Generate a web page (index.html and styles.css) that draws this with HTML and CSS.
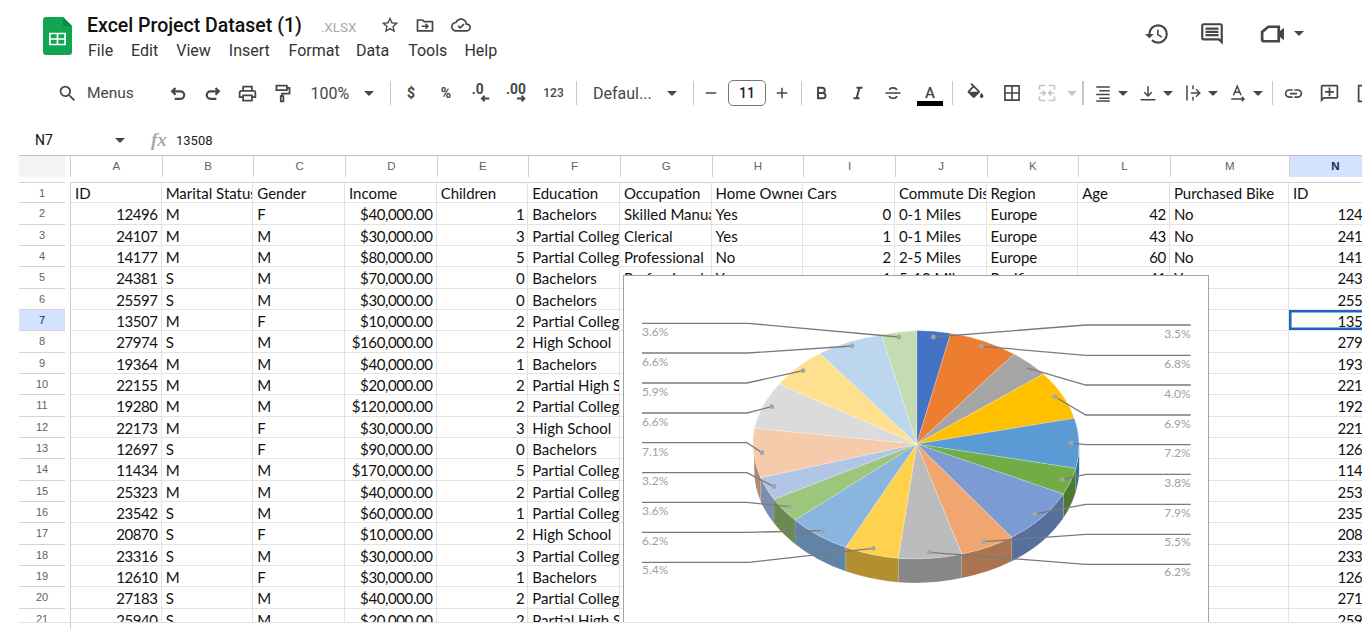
FILE: index.html
```html
<!DOCTYPE html>
<html lang="en">
<head>
<meta charset="utf-8">
<title>Excel Project Dataset (1)</title>
<link rel="stylesheet" href="styles.css">
</head>
<body>
<header class="topbar">
  <svg class="logo" viewBox="0 0 29 38"><path fill="#12a550" d="M3 0h17l9 9v26a3 3 0 0 1-3 3H3a3 3 0 0 1-3-3V3a3 3 0 0 1 3-3z"/><path fill="#0b8a41" d="M20 0l9 9h-9z"/><path fill="none" stroke="#fff" stroke-width="1.7" d="M6.900 16.500h15.200v11H6.900zM6.900 22h15.200M14.500 16.500v11"/></svg>
  <div class="docinfo">
    <div class="titlerow">
      <span class="doctitle">Excel Project Dataset (1)</span>
      <span class="ext">.XLSX</span>
      <svg class="ti star" viewBox="0 0 24 24"><path d="M22 9.240l-7.190-.62L12 2 9.190 8.630 2 9.240l5.460 4.730L5.820 21 12 17.270 18.180 21l-1.630-7.030L22 9.240zM12 15.400l-3.760 2.270 1-4.280-3.320-2.880 4.380-.38L12 6.100l1.710 4.040 4.380.38-3.320 2.880 1 4.280L12 15.400z"/></svg>
      <svg class="ti folder" viewBox="0 0 24 24"><path class="st" d="M3 6h6l2 2h10v11H3z"/><path class="st" d="M8 13.500h7M12.500 10.500l3 3-3 3"/></svg>
      <svg class="ti cloud" viewBox="0 0 24 24"><path d="M19.350 10.040C18.670 6.590 15.640 4 12 4 9.110 4 6.600 5.640 5.350 8.040 2.340 8.360 0 10.910 0 14c0 3.310 2.690 6 6 6h13c2.760 0 5-2.240 5-5 0-2.640-2.050-4.780-4.650-4.960zM19 18H6c-2.210 0-4-1.790-4-4s1.790-4 4-4h.71C7.370 7.690 9.480 6 12 6c3.040 0 5.500 2.460 5.500 5.500v.5H19c1.660 0 3 1.340 3 3s-1.340 3-3 3z"/><path class="st" d="M8.500 13l2.500 2.500 4.500-4.500"/></svg>
    </div>
    <nav class="menubar">
      <span>File</span><span>Edit</span><span>View</span><span>Insert</span><span>Format</span><span>Data</span><span>Tools</span><span>Help</span>
    </nav>
  </div>
  <div class="topright">
    <svg class="bigicon" viewBox="0 0 24 24"><path d="M13 3a9 9 0 0 0-9 9H1l3.890 3.890.07.14L9 12H6c0-3.870 3.130-7 7-7s7 3.130 7 7-3.130 7-7 7c-1.930 0-3.680-.79-4.940-2.060l-1.420 1.420A8.954 8.954 0 0 0 13 21a9 9 0 0 0 0-18zm-1 5v5l4.280 2.540.72-1.210-3.500-2.080V8H12z"/></svg>
    <svg class="bigicon" viewBox="0 0 24 24"><path d="M20 2H4c-1.100 0-2 .9-2 2v12c0 1.100.9 2 2 2h14l4 4V4c0-1.100-.9-2-2-2zm0 15.170L18.830 16H4V4h16v13.170zM6 12h12v2H6zm0-3h12v2H6zm0-3h12v2H6z"/></svg>
    <svg class="bigicon meet" viewBox="0 0 26 24"><path class="st thick" d="M9 5h10v14H5a2 2 0 0 1-2-2V10z"/><path d="M19 10l5-4v12l-5-4z"/></svg>
    <span class="caret"></span>
  </div>
</header>

<div class="toolbar">
  <span class="tool w35"><svg class="ic big" viewBox="0 0 24 24"><path d="M15.500 14h-.79l-.28-.27A6.471 6.471 0 0 0 16 9.500 6.500 6.500 0 1 0 9.500 16c1.610 0 3.090-.59 4.230-1.570l.27.28v.79l5 4.990L20.490 19l-4.990-5zm-6 0C7.010 14 5 11.990 5 9.500S7.010 5 9.500 5 14 7.010 14 9.500 11.990 14 9.500 14z"/></svg></span>
  <span class="menus">Menus</span>
  <span class="tool w35"><svg class="ic mid" viewBox="0 0 24 24"><path class="st thick" d="M9 6L5 10l4 4M5 10h10a4.500 4.500 0 0 1 0 9H8"/></svg></span>
  <span class="tool w35"><svg class="ic mid" viewBox="0 0 24 24"><path class="st thick" d="M15 6l4 4-4 4M19 10H9a4.500 4.500 0 0 0 0 9h7"/></svg></span>
  <span class="tool w35"><svg class="ic big" viewBox="0 0 24 24"><path d="M19 8h-1V3H6v5H5c-1.660 0-3 1.340-3 3v6h4v4h12v-4h4v-6c0-1.660-1.340-3-3-3zM8 5h8v3H8V5zm8 12v2H8v-4h8v2zm2-2v-2H6v2H4v-4c0-.55.45-1 1-1h14c.55 0 1 .45 1 1v4h-2z"/></svg></span>
  <span class="tool w35"><svg class="ic big" viewBox="0 0 24 24"><path class="st" d="M5 3h12v5H5zM17 5.500h3V12h-8.500v3M10 15h3v6h-3z"/></svg></span>
  <span class="zoomval">100%</span>
  <span class="tool w29"><span class="caret"></span></span>
  <span class="sep s390"></span>
  <span class="tool w35 sym">$</span>
  <span class="tool w35 sym">%</span>
  <span class="tool w35"><svg class="ic dech" viewBox="0 0 24 24"><text class="dec" x="2" y="13">.0</text><path class="st" d="M21 18h-8M16 15l-3 3 3 3"/></svg></span>
  <span class="tool w36"><svg class="ic dech" viewBox="0 0 24 24"><text class="dec" x="0" y="13">.00</text><path class="st" d="M12 18h8M17 15l3 3-3 3"/></svg></span>
  <span class="tool w38 num123">123</span>
  <span class="sep s576"></span>
  <span class="fontname">Defaul...</span>
  <span class="tool w34"><span class="caret"></span></span>
  <span class="sep s693"></span>
  <span class="tool w34"><svg class="ic" viewBox="0 0 24 24"><path class="st" d="M5 12h14"/></svg></span>
  <span class="sizebox">11</span>
  <span class="tool w32"><svg class="ic" viewBox="0 0 24 24"><path class="st" d="M5 12h14M12 5v14"/></svg></span>
  <span class="sep s801"></span>
  <span class="tool w38"><svg class="ic" viewBox="0 0 24 24"><path class="st thick" d="M8 5h5.500a3.400 3.400 0 0 1 0 7H8zM8 12h6.500a3.500 3.500 0 0 1 0 7H8z"/></svg></span>
  <span class="tool w35"><svg class="ic" viewBox="0 0 24 24"><path class="st thick" d="M10 5h8M6 19h8M14 5l-4 14"/></svg></span>
  <span class="tool w35"><svg class="ic mid" viewBox="0 0 24 24"><path class="st" d="M3 12h18M16.500 8.500C16 5.500 8 4.500 8 8.500M7.500 15.500c.5 3.500 9 4 9 0"/></svg></span>
  <span class="tool w40 textcolor"><span class="letter">A</span><span class="colorbar"></span></span>
  <span class="sep s952"></span>
  <span class="tool w44"><svg class="ic big" viewBox="0 0 24 24"><path d="M16.560 8.940L7.620 0 6.210 1.410l2.380 2.380-5.150 5.150c-.59.59-.59 1.540 0 2.120l5.500 5.500c.29.29.68.44 1.060.44s.77-.15 1.060-.44l5.500-5.500c.59-.58.59-1.530 0-2.120zM5.210 10L10 5.210 14.790 10H5.210zM19 11.500s-2 2.170-2 3.500c0 1.100.9 2 2 2s2-.9 2-2c0-1.330-2-3.500-2-3.500z"/></svg></span>
  <span class="tool w30"><svg class="ic mid" viewBox="0 0 24 24"><path class="st" d="M3.500 3.500h17v17h-17zM12 3.500v17M3.500 12h17"/></svg></span>
  <span class="tool w40"><svg class="ic off mid" viewBox="0 0 24 24"><path class="st" d="M3 3h7M14 3h7M3 21h7M14 21h7M3 3v5M21 3v5M3 16v5M21 16v5M3 12h6M7 9l3 3-3 3M21 12h-6M17 9l-3 3 3 3"/></svg></span>
  <span class="tool w10"><span class="caret off"></span></span>
  <span class="sep s1083"></span>
  <span class="drop first"><span class="tool w30"><svg class="ic" viewBox="0 0 24 24"><path class="st" d="M3 4h18M7 9h14M3 14h18M7 19h14M3 22.500h18"/></svg></span><span class="tool w10"><span class="caret"></span></span></span>
  <span class="drop"><span class="tool w30"><svg class="ic" viewBox="0 0 24 24"><path class="st" d="M12 3v13M7 11l5 5 5-5M2 21h20"/></svg></span><span class="tool w10"><span class="caret"></span></span></span>
  <span class="drop"><span class="tool w30"><svg class="ic" viewBox="0 0 24 24"><path class="st" d="M4 2v20M21 12H9M16 7l5 5-5 5M12 2v5M12 17v5"/></svg></span><span class="tool w10"><span class="caret"></span></span></span>
  <span class="drop"><span class="tool w30"><svg class="ic" viewBox="0 0 24 24"><path class="st" d="M6 15L11 3l5 12M7.700 11h6.600M3 20h17M17 17l3 3-3 3"/></svg></span><span class="tool w10"><span class="caret"></span></span></span>
  <span class="sep s1272"></span>
  <span class="tool w41"><svg class="ic big" viewBox="0 0 24 24"><path d="M3.900 12c0-1.710 1.390-3.100 3.100-3.100h4V7H7c-2.760 0-5 2.240-5 5s2.240 5 5 5h4v-1.900H7c-1.710 0-3.100-1.390-3.100-3.100zM8 13h8v-2H8v2zm9-6h-4v1.900h4c1.710 0 3.100 1.390 3.100 3.100s-1.390 3.100-3.100 3.100h-4V17h4c2.760 0 5-2.240 5-5s-2.240-5-5-5z"/></svg></span>
  <span class="tool w30"><svg class="ic big" viewBox="0 0 24 24"><path d="M20 2H4c-1.100 0-2 .9-2 2v18l4-4h14c1.100 0 2-.9 2-2V4c0-1.100-.9-2-2-2zm0 14H5.170L4 17.170V4h16v12zM11 5h2v4h4v2h-4v4h-2v-4H7V9h4z"/></svg></span>
  <span class="tool w30 last"><svg class="ic big" viewBox="0 0 24 24"><path class="st" d="M3 3h18v18H3zM8 17v-6M12 17V7M16 17v-3"/></svg></span>
</div>

<div class="formulabar">
  <span class="cellname">N7</span>
  <span class="caret"></span>
  <span class="fx">fx</span>
  <span class="formula">13508</span>
</div>

<main class="sheet">
  <div class="colheads">
    <span class="corner"></span><span class="gutter"></span>
    <span class="ch">A</span><span class="ch">B</span><span class="ch">C</span><span class="ch">D</span><span class="ch">E</span><span class="ch">F</span><span class="ch">G</span><span class="ch">H</span><span class="ch">I</span><span class="ch">J</span><span class="ch">K</span><span class="ch">L</span><span class="ch wide">M</span><span class="ch sel">N</span>
  </div>
  <div class="rows">
    <div class="r first"><span class="h">1</span><span class="gutter"></span><span class="c">ID</span><span class="c">Marital Status</span><span class="c">Gender</span><span class="c">Income</span><span class="c">Children</span><span class="c">Education</span><span class="c">Occupation</span><span class="c">Home Owner</span><span class="c">Cars</span><span class="c">Commute Distance</span><span class="c">Region</span><span class="c">Age</span><span class="c wide">Purchased Bike</span><span class="c">ID</span></div>
    <div class="r"><span class="h">2</span><span class="gutter"></span><span class="c n">12496</span><span class="c">M</span><span class="c">F</span><span class="c n">$40,000.00</span><span class="c n">1</span><span class="c">Bachelors</span><span class="c">Skilled Manual</span><span class="c">Yes</span><span class="c n">0</span><span class="c">0-1 Miles</span><span class="c">Europe</span><span class="c n">42</span><span class="c wide">No</span><span class="c n">12496</span></div>
    <div class="r"><span class="h">3</span><span class="gutter"></span><span class="c n">24107</span><span class="c">M</span><span class="c">M</span><span class="c n">$30,000.00</span><span class="c n">3</span><span class="c">Partial College</span><span class="c">Clerical</span><span class="c">Yes</span><span class="c n">1</span><span class="c">0-1 Miles</span><span class="c">Europe</span><span class="c n">43</span><span class="c wide">No</span><span class="c n">24107</span></div>
    <div class="r"><span class="h">4</span><span class="gutter"></span><span class="c n">14177</span><span class="c">M</span><span class="c">M</span><span class="c n">$80,000.00</span><span class="c n">5</span><span class="c">Partial College</span><span class="c">Professional</span><span class="c">No</span><span class="c n">2</span><span class="c">2-5 Miles</span><span class="c">Europe</span><span class="c n">60</span><span class="c wide">No</span><span class="c n">14177</span></div>
    <div class="r"><span class="h">5</span><span class="gutter"></span><span class="c n">24381</span><span class="c">S</span><span class="c">M</span><span class="c n">$70,000.00</span><span class="c n">0</span><span class="c">Bachelors</span><span class="c">Professional</span><span class="c">Yes</span><span class="c n">1</span><span class="c">5-10 Miles</span><span class="c">Pacific</span><span class="c n">41</span><span class="c wide">Yes</span><span class="c n">24381</span></div>
    <div class="r"><span class="h">6</span><span class="gutter"></span><span class="c n">25597</span><span class="c">S</span><span class="c">M</span><span class="c n">$30,000.00</span><span class="c n">0</span><span class="c">Bachelors</span><span class="c"></span><span class="c"></span><span class="c"></span><span class="c"></span><span class="c"></span><span class="c"></span><span class="c wide"></span><span class="c n">25597</span></div>
    <div class="r"><span class="h hsel">7</span><span class="gutter"></span><span class="c n">13507</span><span class="c">M</span><span class="c">F</span><span class="c n">$10,000.00</span><span class="c n">2</span><span class="c">Partial College</span><span class="c"></span><span class="c"></span><span class="c"></span><span class="c"></span><span class="c"></span><span class="c"></span><span class="c wide"></span><span class="c n active">13508</span></div>
    <div class="r"><span class="h">8</span><span class="gutter"></span><span class="c n">27974</span><span class="c">S</span><span class="c">M</span><span class="c n">$160,000.00</span><span class="c n">2</span><span class="c">High School</span><span class="c"></span><span class="c"></span><span class="c"></span><span class="c"></span><span class="c"></span><span class="c"></span><span class="c wide"></span><span class="c n">27974</span></div>
    <div class="r"><span class="h">9</span><span class="gutter"></span><span class="c n">19364</span><span class="c">M</span><span class="c">M</span><span class="c n">$40,000.00</span><span class="c n">1</span><span class="c">Bachelors</span><span class="c"></span><span class="c"></span><span class="c"></span><span class="c"></span><span class="c"></span><span class="c"></span><span class="c wide"></span><span class="c n">19364</span></div>
    <div class="r"><span class="h">10</span><span class="gutter"></span><span class="c n">22155</span><span class="c">M</span><span class="c">M</span><span class="c n">$20,000.00</span><span class="c n">2</span><span class="c">Partial High School</span><span class="c"></span><span class="c"></span><span class="c"></span><span class="c"></span><span class="c"></span><span class="c"></span><span class="c wide"></span><span class="c n">22155</span></div>
    <div class="r"><span class="h">11</span><span class="gutter"></span><span class="c n">19280</span><span class="c">M</span><span class="c">M</span><span class="c n">$120,000.00</span><span class="c n">2</span><span class="c">Partial College</span><span class="c"></span><span class="c"></span><span class="c"></span><span class="c"></span><span class="c"></span><span class="c"></span><span class="c wide"></span><span class="c n">19280</span></div>
    <div class="r"><span class="h">12</span><span class="gutter"></span><span class="c n">22173</span><span class="c">M</span><span class="c">F</span><span class="c n">$30,000.00</span><span class="c n">3</span><span class="c">High School</span><span class="c"></span><span class="c"></span><span class="c"></span><span class="c"></span><span class="c"></span><span class="c"></span><span class="c wide"></span><span class="c n">22173</span></div>
    <div class="r"><span class="h">13</span><span class="gutter"></span><span class="c n">12697</span><span class="c">S</span><span class="c">F</span><span class="c n">$90,000.00</span><span class="c n">0</span><span class="c">Bachelors</span><span class="c"></span><span class="c"></span><span class="c"></span><span class="c"></span><span class="c"></span><span class="c"></span><span class="c wide"></span><span class="c n">12697</span></div>
    <div class="r"><span class="h">14</span><span class="gutter"></span><span class="c n">11434</span><span class="c">M</span><span class="c">M</span><span class="c n">$170,000.00</span><span class="c n">5</span><span class="c">Partial College</span><span class="c"></span><span class="c"></span><span class="c"></span><span class="c"></span><span class="c"></span><span class="c"></span><span class="c wide"></span><span class="c n">11434</span></div>
    <div class="r"><span class="h">15</span><span class="gutter"></span><span class="c n">25323</span><span class="c">M</span><span class="c">M</span><span class="c n">$40,000.00</span><span class="c n">2</span><span class="c">Partial College</span><span class="c"></span><span class="c"></span><span class="c"></span><span class="c"></span><span class="c"></span><span class="c"></span><span class="c wide"></span><span class="c n">25323</span></div>
    <div class="r"><span class="h">16</span><span class="gutter"></span><span class="c n">23542</span><span class="c">S</span><span class="c">M</span><span class="c n">$60,000.00</span><span class="c n">1</span><span class="c">Partial College</span><span class="c"></span><span class="c"></span><span class="c"></span><span class="c"></span><span class="c"></span><span class="c"></span><span class="c wide"></span><span class="c n">23542</span></div>
    <div class="r"><span class="h">17</span><span class="gutter"></span><span class="c n">20870</span><span class="c">S</span><span class="c">F</span><span class="c n">$10,000.00</span><span class="c n">2</span><span class="c">High School</span><span class="c"></span><span class="c"></span><span class="c"></span><span class="c"></span><span class="c"></span><span class="c"></span><span class="c wide"></span><span class="c n">20870</span></div>
    <div class="r"><span class="h">18</span><span class="gutter"></span><span class="c n">23316</span><span class="c">S</span><span class="c">M</span><span class="c n">$30,000.00</span><span class="c n">3</span><span class="c">Partial College</span><span class="c"></span><span class="c"></span><span class="c"></span><span class="c"></span><span class="c"></span><span class="c"></span><span class="c wide"></span><span class="c n">23316</span></div>
    <div class="r"><span class="h">19</span><span class="gutter"></span><span class="c n">12610</span><span class="c">M</span><span class="c">F</span><span class="c n">$30,000.00</span><span class="c n">1</span><span class="c">Bachelors</span><span class="c"></span><span class="c"></span><span class="c"></span><span class="c"></span><span class="c"></span><span class="c"></span><span class="c wide"></span><span class="c n">12610</span></div>
    <div class="r"><span class="h">20</span><span class="gutter"></span><span class="c n">27183</span><span class="c">S</span><span class="c">M</span><span class="c n">$40,000.00</span><span class="c n">2</span><span class="c">Partial College</span><span class="c"></span><span class="c"></span><span class="c"></span><span class="c"></span><span class="c"></span><span class="c"></span><span class="c wide"></span><span class="c n">27183</span></div>
    <div class="r"><span class="h">21</span><span class="gutter"></span><span class="c n">25940</span><span class="c">S</span><span class="c">M</span><span class="c n">$20,000.00</span><span class="c n">2</span><span class="c">Partial High School</span><span class="c"></span><span class="c"></span><span class="c"></span><span class="c"></span><span class="c"></span><span class="c"></span><span class="c wide"></span><span class="c n">25940</span></div>
  </div>
  <div class="tail"></div>

  <figure class="chart">
    <svg class="pie" viewBox="624 276 585 346" width="585" height="346">
      <g class="walls">
        <path fill="#2f6ea3" d="M1079.200 444A162.500 113.500 0 0 1 1075.700 468.300L1075.700 492.300A162.500 113.500 0 0 0 1079.200 468Z"/>
        <path fill="#4c7a2f" d="M1075.700 468.300A162.500 113.500 0 0 1 1063.300 494L1063.300 518A162.500 113.500 0 0 0 1075.700 492.300Z"/>
        <path fill="#566f9c" d="M1063.300 494A162.500 113.500 0 0 1 1011.700 537.300L1011.700 561.300A162.500 113.500 0 0 0 1063.300 518Z"/>
        <path fill="#a9744f" d="M1011.700 537.300A162.500 113.500 0 0 1 961.700 554L961.700 578A162.500 113.500 0 0 0 1011.700 561.300Z"/>
        <path fill="#878787" d="M961.700 554A162.500 113.500 0 0 1 898.300 558.300L898.300 582.300A162.500 113.500 0 0 0 961.700 578Z"/>
        <path fill="#b2902f" d="M898.300 558.300A162.500 113.500 0 0 1 845.700 547.300L845.700 571.300A162.500 113.500 0 0 0 898.300 582.300Z"/>
        <path fill="#5f84a8" d="M845.700 547.300A162.500 113.500 0 0 1 795 520L795 544A162.500 113.500 0 0 0 845.700 571.300Z"/>
        <path fill="#6b8a52" d="M795 520A162.500 113.500 0 0 1 774 499.300L774 523.300A162.500 113.500 0 0 0 795 544Z"/>
        <path fill="#7d8db0" d="M774 499.300A162.500 113.500 0 0 1 760.700 477.700L760.700 501.700A162.500 113.500 0 0 0 774 523.300Z"/>
        <path fill="#b08b73" d="M760.700 477.700A162.500 113.500 0 0 1 754.200 444L754.200 468A162.500 113.500 0 0 0 760.700 501.700Z"/>
      </g>
      <g class="slices">
        <path fill="#4472c4" d="M916.700 444L916.700 330.500A162.500 113.500 0 0 1 950.700 333.300Z"/>
        <path fill="#ed7d31" d="M916.700 444L950.700 333.300A162.500 113.500 0 0 1 1014 354Z"/>
        <path fill="#a5a5a5" d="M916.700 444L1014 354A162.500 113.500 0 0 1 1043.300 374Z"/>
        <path fill="#ffc000" d="M916.700 444L1043.300 374A162.500 113.500 0 0 1 1074.300 418.300Z"/>
        <path fill="#5b9bd5" d="M916.700 444L1074.300 418.300A162.500 113.500 0 0 1 1075.700 468.300Z"/>
        <path fill="#70ad47" d="M916.700 444L1075.700 468.300A162.500 113.500 0 0 1 1063.300 494Z"/>
        <path fill="#7c9bd4" d="M916.700 444L1063.300 494A162.500 113.500 0 0 1 1011.700 537.300Z"/>
        <path fill="#f1a56f" d="M916.700 444L1011.700 537.300A162.500 113.500 0 0 1 961.700 554Z"/>
        <path fill="#bcbcbc" d="M916.700 444L961.700 554A162.500 113.500 0 0 1 898.300 558.300Z"/>
        <path fill="#ffd24d" d="M916.700 444L898.300 558.300A162.500 113.500 0 0 1 845.700 547.300Z"/>
        <path fill="#8ab5df" d="M916.700 444L845.700 547.300A162.500 113.500 0 0 1 795 520Z"/>
        <path fill="#9bc67c" d="M916.700 444L795 520A162.500 113.500 0 0 1 774 499.300Z"/>
        <path fill="#b1c5e7" d="M916.700 444L774 499.300A162.500 113.500 0 0 1 760.700 477.700Z"/>
        <path fill="#f6cbac" d="M916.700 444L760.700 477.700A162.500 113.500 0 0 1 754.300 428.300Z"/>
        <path fill="#dbdbdb" d="M916.700 444L754.300 428.300A162.500 113.500 0 0 1 779.300 384Z"/>
        <path fill="#ffe08f" d="M916.700 444L779.300 384A162.500 113.500 0 0 1 820 353.300Z"/>
        <path fill="#bcd6ee" d="M916.700 444L820 353.300A162.500 113.500 0 0 1 881.700 335Z"/>
        <path fill="#c5dcb3" d="M916.700 444L881.700 335A162.500 113.500 0 0 1 916.700 330.500Z"/>
      </g>
      <g class="leaders">
        <path d="M642 323.300H748L899 337"/>
        <path d="M642 353H748L852 346"/>
        <path d="M642 383H747L803 370.700"/>
        <path d="M642 413H747L771.700 406.700"/>
        <path d="M642 442.700H747L762 452.700"/>
        <path d="M642 472.700H747L774 486.700"/>
        <path d="M642 502.300H747L790 506.700"/>
        <path d="M642 532.300H748L823 530.700"/>
        <path d="M642 562.300H749L873.300 548.300"/>
        <path d="M1190.700 325H1085.700L933.300 337"/>
        <path d="M1190.700 355.300H1085.700L981.300 346.300"/>
        <path d="M1190.700 385H1085.700L1025 367.300"/>
        <path d="M1190.700 415H1085.700L1055 396.700"/>
        <path d="M1190.700 444.700H1085.700L1071 443"/>
        <path d="M1190.700 474.300H1085.700L1062.300 479.700"/>
        <path d="M1190.700 504.300H1085.700L1034.700 514"/>
        <path d="M1190.700 534.300H1085.700L984 541.700"/>
        <path d="M1190.700 564.300H1085.700L929.300 552.300"/>
      </g>
      <g class="dots">
        <circle cx="899" cy="337" r="2.400"/><circle cx="852" cy="346" r="2.400"/><circle cx="803" cy="370.700" r="2.400"/><circle cx="771.700" cy="406.700" r="2.400"/><circle cx="762" cy="452.700" r="2.400"/><circle cx="774" cy="486.700" r="2.400"/><circle cx="790" cy="506.700" r="2.400"/><circle cx="823" cy="530.700" r="2.400"/><circle cx="873.300" cy="548.300" r="2.400"/>
        <circle cx="933.300" cy="337" r="2.400"/><circle cx="981.300" cy="346.300" r="2.400"/><circle cx="1025" cy="367.300" r="2.400"/><circle cx="1055" cy="396.700" r="2.400"/><circle cx="1071" cy="443" r="2.400"/><circle cx="1062.300" cy="479.700" r="2.400"/><circle cx="1034.700" cy="514" r="2.400"/><circle cx="984" cy="541.700" r="2.400"/><circle cx="929.300" cy="552.300" r="2.400"/>
      </g>
      <g class="pct">
        <text x="642" y="336">3.6%</text><text x="642" y="365.500">6.6%</text><text x="642" y="396">5.9%</text><text x="642" y="425.500">6.6%</text><text x="642" y="455.500">7.1%</text><text x="642" y="485">3.2%</text><text x="642" y="515">3.6%</text><text x="642" y="544.500">6.2%</text><text x="642" y="574">5.4%</text>
      </g>
      <g class="pct end">
        <text x="1190.700" y="337.500">3.5%</text><text x="1190.700" y="368">6.8%</text><text x="1190.700" y="397.500">4.0%</text><text x="1190.700" y="427.500">6.9%</text><text x="1190.700" y="457">7.2%</text><text x="1190.700" y="486.500">3.8%</text><text x="1190.700" y="517">7.9%</text><text x="1190.700" y="546">5.5%</text><text x="1190.700" y="576">6.2%</text>
      </g>
    </svg>
  </figure>
</main>
</body>
</html>
```

FILE: styles.css
```css
* { box-sizing: border-box; }
html, body { margin: 0; padding: 0; }
body {
  width: 1362px;
  height: 629px;
  overflow: hidden;
  background: #fff;
  font-family: "Roboto", "Liberation Sans", sans-serif;
  color: #1f1f1f;
}
.st { fill: none; stroke: #444746; stroke-width: 2; }
.st.thick { stroke-width: 2.6; }
.caret {
  display: inline-block;
  width: 0;
  height: 0;
  border-left: 5px solid transparent;
  border-right: 5px solid transparent;
  border-top: 5px solid #444746;
}
.caret.off { border-top-color: #c4c7c5; }

/* top bar */
.topbar { display: flex; height: 71px; padding-left: 43px; }
.logo { width: 29px; height: 38px; margin-top: 17px; flex-shrink: 0; }
.docinfo { margin-left: 15px; padding-top: 13px; }
.titlerow { display: flex; align-items: center; height: 24px; }
.doctitle { font-size: 19.5px; font-weight: 500; color: #111; white-space: nowrap; }
.ext { font-size: 13.5px; color: #a8a8a8; margin-left: 19px; margin-top: 3px; }
.ti { width: 20px; height: 20px; fill: #444746; }
.star { margin-left: 23px; }
.folder { margin-left: 15px; }
.cloud { margin-left: 16px; }
.menubar { display: flex; height: 26px; align-items: center; font-size: 16px; color: #333; margin-left: 1px; }
.menubar span { margin-right: 18px; }
.menubar span:nth-child(4) { margin-right: 18.7px; }
.menubar span:nth-child(5) { margin-right: 16.4px; }
.menubar span:nth-child(6) { margin-right: 19px; }
.menubar span:nth-child(7) { margin-right: 17px; }
.topright { display: flex; align-items: center; height: 26px; margin: 21px 0 0 auto; padding-right: 58px; }
.bigicon { width: 26px; height: 26px; fill: #444746; margin-left: 29px; }
.meet { margin-left: 34px; width: 27px; }
.topright .caret { margin-left: 8px; margin-bottom: 2px; }

/* toolbar */
.toolbar { display: flex; align-items: center; height: 44px; padding-left: 50px; color: #444746; white-space: nowrap; }
.tool { display: flex; align-items: center; justify-content: center; flex-shrink: 0; height: 26px; }
.w10 { width: 10px; } .w29 { width: 29px; } .w30 { width: 30px; } .w32 { width: 32px; } .w34 { width: 34px; }
.w35 { width: 35px; } .w36 { width: 36px; } .w38 { width: 38px; } .w40 { width: 40px; } .w41 { width: 41px; } .w44 { width: 44px; }
.ic { width: 18px; height: 18px; fill: #444746; }
.ic.mid { width: 20px; height: 20px; }
.ic.big { width: 21px; height: 21px; }
.ic.dech { width: 22px; height: 22px; overflow: visible; }
.ic.off .st { stroke: #c4c7c5; }
.last { margin-left: 7px; }
.menus { width: 73px; margin-left: 2px; font-size: 15.5px; flex-shrink: 0; }
.zoomval { width: 44px; margin-left: 10.5px; font-size: 16px; flex-shrink: 0; }
.sym { font-size: 14px; font-weight: 700; }
.num123 { font-size: 12px; font-weight: 500; }
.dec { font: 700 15px "Roboto", sans-serif; fill: #444746; }
.fontname { width: 62px; margin-left: 16px; font-size: 16px; flex-shrink: 0; }
.sizebox { width: 38px; height: 26px; flex-shrink: 0; border: 1px solid #747775; border-radius: 5px; text-align: center; line-height: 24px; font-size: 14px; font-weight: 500; color: #1f1f1f; }
.sep { width: 1.5px; height: 24px; background: #c7c7c7; flex-shrink: 0; }
.s390 { margin: 0 2.5px 0 6px; }
.s576 { margin-left: 3px; }
.s693 { margin-left: 3.5px; }
.s801 { margin-left: 2.5px; }
.s952 { margin-left: 1.5px; }
.s1083 { margin-left: 5px; }
.s1272 { margin-left: 8.5px; }
.textcolor { flex-direction: column; justify-content: flex-end; height: 28px; margin-top: -2px; }
.letter { font-size: 15px; font-weight: 500; line-height: 16px; }
.colorbar { width: 26px; height: 5px; background: #000; }
.drop { display: flex; flex-shrink: 0; margin-left: 5px; }
.drop.first { margin-left: 4.5px; }

/* formula bar */
.formulabar { display: flex; align-items: center; height: 30px; margin-top: 10px; padding-left: 35px; }
.cellname { width: 80px; font-size: 14px; color: #111; }
.fx { margin-left: 26px; width: 25px; font: italic 700 19px "Liberation Serif", serif; color: #a9a9a9; }
.formula { font-size: 13px; color: #222; }
.formulabar .caret { flex-shrink: 0; }

/* sheet */
.sheet { position: relative; margin-left: 19px; width: 1343px; overflow: hidden; }
.colheads { display: flex; height: 27px; border-top: 1px solid #c4c4c4; padding-bottom: 5px; }
.corner { width: 46px; flex-shrink: 0; background: #f3f3f3; }
.gutter { width: 5px; flex-shrink: 0; }
.ch { width: 91.67px; flex-shrink: 0; border-left: 1px solid #d0d0d0; text-align: center; font: 11.5px/21px "Liberation Sans", sans-serif; color: #5f6368; }
.ch.wide, .c.wide { width: 119px; }
.ch.sel { background: #d3e3fd; font-weight: 700; color: #0b2a5c; width: 92px; }
.rows { height: 440px; overflow: hidden; border-bottom: 1px solid #e0e0e0; box-sizing: content-box; }
.r { display: flex; height: 21.33px; }
.h { width: 46px; flex-shrink: 0; text-align: center; border-bottom: 1px solid #d4d4d4; font: 11px/21px "Liberation Sans", sans-serif; color: #5f6368; }
.hsel { background: #d3e3fd; color: #0b2a5c; }
.c { width: 91.67px; flex-shrink: 0; padding: 0 3px 0 4px; overflow: hidden; white-space: nowrap; font: 15px/22px "Lato", sans-serif; color: #111; border-bottom: 1px solid #e3e3e3; border-right: 1px solid #e3e3e3; }
.c:nth-child(3) { border-left: 1px solid #ccc; }
.c:last-child { width: 94px; }
.r.first .c, .r.first .h { border-top: 1.5px solid #d2d2d2; }
.r.first .c { line-height: 21px; }
.n { text-align: right; letter-spacing: -.4px; }
.active { box-shadow: inset 0 0 0 2.5px #1c64c4; }
.tail { height: 7px; margin-left: 51px; border-left: 1px solid #ccc; }

/* chart over the grid */
.chart { position: absolute; left: 604px; top: 120px; width: 586px; height: 347px; margin: 0; background: #fff; border: 1px solid #a3a3a3; border-bottom: 0; }
.pie { display: block; }
.walls path { stroke: rgba(255,255,255,.2); stroke-width: .5; }
.slices path { stroke: rgba(255,255,255,.45); stroke-width: .5; }
.leaders path { fill: none; stroke: #7a7a7a; stroke-width: 1.3; }
.dots circle { fill: #a5a5a5; }
.pct text { font: 12px "Lato", sans-serif; fill: #a0a0a0; }
.pct.end text { text-anchor: end; }
```
